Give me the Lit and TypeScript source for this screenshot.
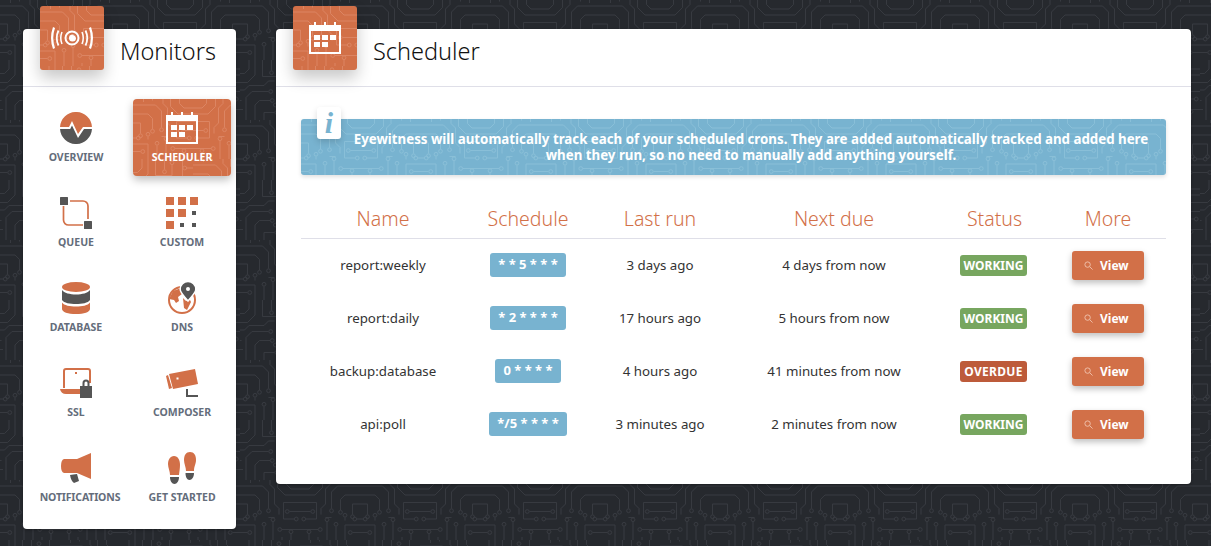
import { LitElement, html, css, svg } from "lit";
import { customElement } from "lit/decorators.js";

const motif = `<path d='M0 8h30l8 8v22M0 20h20l6 6v14M0 32h10v14M50 0v10l10 10h20M62 0v6l6 6h12M80 30H58v22h14M0 60h20v20M32 62v18M44 56v24M56 66h24M68 72v8M0 70h10M38 50h8M14 0v4M26 0v2M40 0v6l6 6v20l6 6v8M80 42H66M0 52h4M20 50v4M56 76v4'/><circle cx='38' cy='41' r='2.500'/><circle cx='26' cy='43' r='2.500'/><circle cx='10' cy='49' r='2.500'/><circle cx='44' cy='53' r='2.500'/><circle cx='32' cy='59' r='2.500'/><circle cx='75' cy='52' r='2.500'/><circle cx='13' cy='70' r='2.500'/><circle cx='68' cy='69' r='2.500'/><circle cx='53' cy='66' r='2.500'/><circle cx='63' cy='42' r='2.500'/><circle cx='7' cy='52' r='2.500'/><circle cx='20' cy='47' r='2.500'/>`;
const circuit = (c: string) =>
  `url("data:image/svg+xml,${encodeURIComponent(
    `<svg xmlns='http://www.w3.org/2000/svg' width='120' height='120' viewBox='0 0 160 160' fill='none' stroke='${c}' stroke-width='1.300'><g>${motif}</g><g transform='translate(160 0) scale(-1 1)'>${motif}</g><g transform='translate(0 160) rotate(-90)'>${motif}</g><g transform='translate(80 80)'>${motif}</g></svg>`
  )}")`;

const O = "#d27048";
const D = "#555";

const calendarShape = svg`
  <path d="M5 0h2v3H5zM15 0h2v3h-2zM25 0h2v3h-2z"/>
  <path fill-rule="evenodd" d="M0 3h32v29H0zM2 9v21h28V9z"/>
  <path d="M5 13h6v5H5zM13 13h6v5h-6zM21 13h6v5h-6zM5 20h6v5H5zM13 20h6v5h-6z"/>`;
const calIcon = html`<svg viewBox="0 0 32 32" width="32" height="32" fill="#fff">${calendarShape}</svg>`;

const icons: Record<string, any> = {
  overview: svg`<svg viewBox="0 0 32 32" width="32" height="32"><path fill="${O}" d="M.03 15A16 16 0 0 1 31.970 15H23L18 22 12 9 9 15z"/><path fill="${D}" d="M.03 17H10.200L12 13.500 18 26 24 17H31.970A16 16 0 0 1 .03 17z"/></svg>`,
  queue: svg`<svg viewBox="0 0 32 32" width="32" height="32"><path fill="none" stroke="${O}" stroke-width="1.700" d="M10 4h13a5 5 0 0 1 5 5v13M3.500 9v14a5 5 0 0 0 5 5H23"/><rect width="8" height="8" fill="${D}" rx=".5"/><rect x="24" y="24" width="8" height="8" fill="${D}" rx=".5"/></svg>`,
  custom: svg`<svg viewBox="0 0 32 32" width="32" height="32"><g fill="${O}"><rect width="8" height="8"/><rect x="12" width="8" height="8"/><rect x="24" width="8" height="8"/><rect y="12" width="8" height="8"/><rect x="12" y="12" width="8" height="8"/><rect y="24" width="8" height="8"/></g><g fill="${D}"><rect x="26" y="14" width="4" height="4"/><rect x="14" y="26" width="4" height="4"/><rect x="26" y="26" width="4" height="4"/></g></svg>`,
  database: svg`<svg viewBox="0 0 28 32" width="28" height="32"><ellipse cx="14" cy="5" rx="14" ry="5" fill="${O}"/><path fill="${D}" d="M0 8c2 3 8 4.500 14 4.500S26 11 28 8v10c-2 3-8 4-14 4S2 21 0 18z"/><path fill="${O}" d="M0 20.500c2 3 8 4 14 4s12-1 14-4V27c0 3-6 5-14 5S0 30 0 27z"/></svg>`,
  dns: svg`<svg viewBox="0 0 28 32" width="28" height="32"><circle cx="14" cy="18" r="13" fill="none" stroke="${O}" stroke-width="2"/><path fill="${O}" d="M5 9l8-3 1 6-4 3 1 4-3 2-2-3-5-1zM15 16l3 3 4-1 1 2-4 8-3-2z"/><path fill="${D}" stroke="#fff" stroke-width="1.500" fill-rule="evenodd" d="M20 -.5a7.800 7.800 0 0 1 7.800 7.800c0 4-4.800 7.500-7.800 11.700-3-4.200-7.800-7.700-7.800-11.700A7.800 7.800 0 0 1 20 -.5z"/><circle cx="20" cy="7" r="2" fill="#fff"/></svg>`,
  ssl: svg`<svg viewBox="0 0 32 30" width="32" height="30"><path fill="none" stroke="${O}" stroke-width="2" d="M4 20V3a2 2 0 0 1 2-2h22a2 2 0 0 1 2 2v12"/><rect x="15" y="4" width="2" height="2" fill="${O}"/><path fill="${O}" d="M0 21h20v5H6q-5 0-6-5z"/><path fill="${D}" d="M20 30V18h2.500v-3a3.500 3.500 0 0 1 7 0v3H32v12zM24.500 18h3v-3a1.500 1.500 0 0 0-3 0z"/></svg>`,
  composer: svg`<svg viewBox="0 0 32 28" width="32" height="28"><path fill="${O}" d="M3 5l26-5 3 15-25 5z"/><path fill="${O}" d="M0 7l2-1 4 13-3 1z"/><rect x="10.500" y="8.500" width="2" height="2" fill="#fff"/><path fill="none" stroke="${D}" stroke-width="2" d="M21 20v7h11"/></svg>`,
  notifications: svg`<svg viewBox="0 0 30 30" width="30" height="30"><path fill="${O}" d="M3 6h13L30 0v26L16 20H3q-3-1-3-7t3-7z"/><path fill="${D}" d="M9 22l7-1 2 7-5 2q-3-2-4-8z"/></svg>`,
  started: svg`<svg viewBox="0 0 28 32" width="28" height="32"><path fill="${O}" d="M6 4c4 0 6 4 6 9 0 3-.500 6-1 10H2C2 19 0 16 0 12c0-4 2-8 6-8zM22 0c4 0 6 3 6 8 0 4-2 6-2 11h-8c0-4-2-7-2-11 0-5 2-8 6-8z"/><path fill="${D}" d="M2 25h9c0 4-2 7-4.500 7S2 29 2 25zM17.500 21H26c0 4-2 7-4.500 7s-4-3-4-7z"/></svg>`,
};

const navItems = [
  ["overview", "OVERVIEW"], ["scheduler", "SCHEDULER"], ["queue", "QUEUE"], ["custom", "CUSTOM"],
  ["database", "DATABASE"], ["dns", "DNS"], ["ssl", "SSL"], ["composer", "COMPOSER"],
  ["notifications", "NOTIFICATIONS"], ["started", "GET STARTED"],
];

const rows = [
  ["report:weekly", "* * 5 * * *", "3 days ago", "4 days from now", "WORKING"],
  ["report:daily", "* 2 * * * *", "17 hours ago", "5 hours from now", "WORKING"],
  ["backup:database", "0 * * * *", "4 hours ago", "41 minutes from now", "OVERDUE"],
  ["api:poll", "*/5 * * * *", "3 minutes ago", "2 minutes from now", "WORKING"],
];

const monitorIcon = svg`<svg viewBox="0 0 42 22" width="42" height="22" fill="none" stroke="#fff">
  <circle cx="21" cy="11" r="6.500" stroke-width="2"/><circle cx="21.500" cy="11" r="3.500" fill="#fff" stroke="none"/>
  <path fill="#d27048" stroke="none" d="M21.500 8a3 3 0 0 1 3 3 2.200 2.200 0 0 0-3-3z"/>
  <path stroke-width="1.500" d="M11 5q-2.500 6 0 12M31 5q2.500 6 0 12"/>
  <path stroke-width="1.800" d="M7.500 3.500q-3.500 7.500 0 15M34.500 3.500q3.500 7.500 0 15"/>
  <path fill="#fff" stroke="none" d="M4 1Q.5 11 4 21L2 22Q-2 11 2 0zM38 1Q41.500 11 38 21L40 22Q44 11 40 0z"/></svg>`;

@customElement("app-root")
export class AppRoot extends LitElement {
  static styles = css`
    :host {
      display: flex;
      align-items: flex-start;
      gap: 40px;
      box-sizing: border-box;
      height: 546px;
      padding: 29px 20px 0 23px;
      overflow: hidden;
      background-color: #26292e;
      background-image: var(--bg);
      font-family: "Noto Sans", "Open Sans", sans-serif;
      color: #222;
    }
    .panel {
      position: relative;
      background: #fff;
      border-radius: 4px;
      box-shadow: 0 1px 3px rgba(0, 0, 0, 0.3);
    }
    .side { width: 213px; height: 500px; flex: none; }
    .main { width: 915px; height: 455px; flex: none; }
    .head {
      box-sizing: border-box;
      height: 58px;
      border-bottom: 1px solid #dfdfe8;
      padding: 0 0 13px 97px;
      display: flex;
      align-items: center;
      font-size: 23.500px;
      color: #111;
      font-weight: 300;
    }
    .badge {
      position: absolute;
      left: 17px;
      top: -23px;
      width: 64px;
      height: 64px;
      border-radius: 3px;
      background-color: #d27048;
      background-image: var(--tile);
      box-shadow: 0 8px 16px rgba(0, 0, 0, 0.22);
      display: flex;
      align-items: center;
      justify-content: center;
    }
    .nav {
      display: grid;
      grid-template-columns: 98px 98px;
      column-gap: 8px;
      grid-auto-rows: 77px;
      row-gap: 8px;
      padding: 12px 0 0 4px;
    }
    .item {
      display: flex;
      flex-direction: column;
      align-items: center;
      border-radius: 4px;
      font-size: 10.500px;
      font-weight: 700;
      color: #646d7b;
      white-space: nowrap;
    }
    .ico {
      height: 34px;
      margin-top: 12px;
      margin-bottom: 5px;
      display: flex;
      align-items: center;
      justify-content: center;
    }
    .lbl { line-height: 14px; }
    .lbl.notifications { margin-left: 8px; letter-spacing: -0.15px; }
    .item.active {
      background-color: #d27048;
      background-image: var(--tile);
      color: #fff;
      box-shadow: 0 4px 8px rgba(0, 0, 0, 0.25);
    }
    .body { padding: 32px 25px 0; }
    .info {
      position: relative;
      box-sizing: border-box;
      height: 56px;
      border-radius: 3px;
      background-color: #78b3d0;
      background-image: var(--blue);
      box-shadow: 0 2px 4px rgba(0, 0, 0, 0.12);
      color: #fff;
      font-weight: 700;
      font-size: 13.300px;
      line-height: 16px;
      text-align: center;
      padding: 12px 12px 0 47px;
    }
    .i {
      position: absolute;
      left: 16px;
      top: -12px;
      width: 24px;
      height: 32px;
      background: #fff;
      border-radius: 3px;
      color: #78b3d0;
      font: italic 700 30px/31px "Liberation Serif", serif;
      text-align: center;
      box-shadow: 0 3px 6px rgba(0, 0, 0, 0.15);
    }
    .table { margin-top: 26px; font-size: 13.300px; color: #333; }
    .tr {
      display: grid;
      grid-template-columns: 164px 126px 138px 210px 111px 116px;
      align-items: center;
      justify-items: center;
      height: 53px;
    }
    .tr.th {
      height: 38px;
      border-bottom: 1px solid #dfdfe8;
      box-sizing: border-box;
      padding-bottom: 2px;
      font-size: 19.500px;
      font-weight: 300;
      color: #d27048;
    }
    .t { padding-bottom: 2px; }
    .sched {
      background: #78b3d0;
      color: #fff;
      font-weight: 700;
      font-size: 13px;
      border-radius: 3px;
      height: 24px;
      line-height: 23px;
      padding: 0 8px;
      margin-bottom: 1px;
      white-space: nowrap;
    }
    .status {
      color: #fff;
      font-weight: 700;
      font-size: 12px;
      border-radius: 3px;
      height: 21px;
      line-height: 21px;
      padding: 0 4px;
      margin-right: 2px;
      background: #77a65f;
    }
    .status.overdue { background: #bd5b3a; letter-spacing: 0.3px; }
    .view {
      display: flex;
      align-items: center;
      gap: 7px;
      box-sizing: border-box;
      width: 72px;
      height: 29px;
      padding-left: 12px;
      border-radius: 3px;
      background: #d27048;
      color: #fff;
      font-weight: 700;
      font-size: 12px;
      box-shadow: 0 3px 6px rgba(0, 0, 0, 0.25);
    }
  `;

  connectedCallback() {
    super.connectedCallback();
    this.style.setProperty("--bg", circuit("#383b41"));
    this.style.setProperty("--tile", circuit("#dc8664"));
    this.style.setProperty("--blue", circuit("#8abfd8"));
  }

  render() {
    return html`
      <div class="panel side">
        <div class="head">Monitors</div>
        <div class="badge">${monitorIcon}</div>
        <div class="nav">
          ${navItems.map(
            ([k, l]) => html`<div class="item ${k === "scheduler" ? "active" : ""}">
              <div class="ico">${k === "scheduler" ? calIcon : icons[k]}</div>
              <div class="lbl ${k}">${l}</div>
            </div>`
          )}
        </div>
      </div>
      <div class="panel main">
        <div class="head">Scheduler</div>
        <div class="badge">${calIcon}</div>
        <div class="body">
          <div class="info">
            <div class="i">i</div>
            Eyewitness will automatically track each of your scheduled crons. They are added automatically tracked and added here when they run, so no need to manually add anything yourself.
          </div>
          <div class="table">
            <div class="tr th">
              <div>Name</div><div>Schedule</div><div>Last run</div><div>Next due</div><div>Status</div><div>More</div>
            </div>
            ${rows.map(
              (r) => html`<div class="tr">
                <div class="t">${r[0]}</div>
                <div class="sched">${r[1]}</div>
                <div class="t">${r[2]}</div>
                <div class="t">${r[3]}</div>
                <div class="status ${r[4] === "OVERDUE" ? "overdue" : ""}">${r[4]}</div>
                <div class="view">
                  <svg viewBox="0 0 10 10" width="9" height="9" fill="none" stroke="#f0c4b0" stroke-width="1"><circle cx="4" cy="4" r="3"/><path d="M6.500 6.500L9.500 9.500"/></svg>
                  View
                </div>
              </div>`
            )}
          </div>
        </div>
      </div>
    `;
  }
}
